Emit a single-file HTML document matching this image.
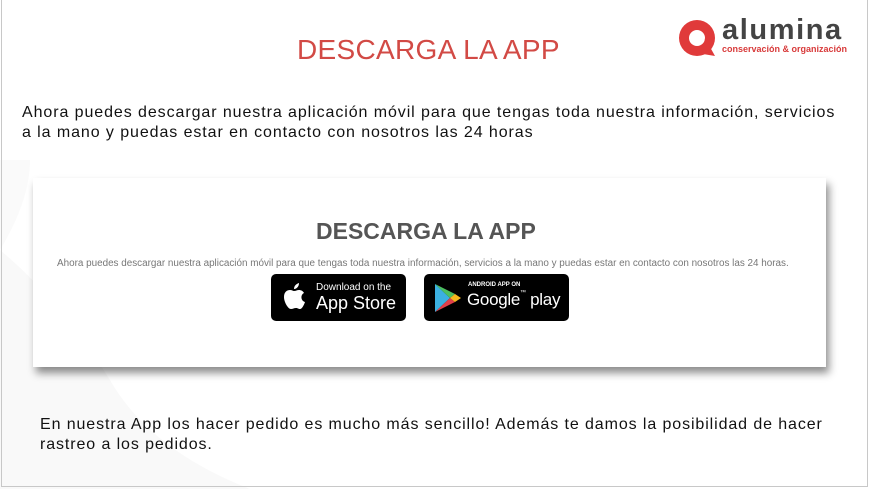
<!DOCTYPE html>
<html><head><meta charset="utf-8"><style>
body{margin:0;width:869px;height:489px;background:#fff;position:relative;overflow:hidden;font-family:"Liberation Sans",sans-serif}
.frame{position:absolute;left:1px;top:-2px;width:865px;height:487px;border:1px solid #c8c8c8}
.t{position:absolute;white-space:nowrap}
.card{position:absolute;left:33px;top:178px;width:793px;height:189px;background:#fff;box-shadow:3px 6px 8px rgba(0,0,0,.45)}
.badge{position:absolute;top:274px;height:47px;background:#000;border-radius:5px;color:#fff}
</style></head><body>
<svg style="position:absolute;left:0;top:0" width="869" height="489"><path d="M0 250 Q60 300 110 380 Q150 450 250 489 L0 489Z" fill="#f9f9f9"/><path d="M0 250 Q30 200 30 160 L0 160Z" fill="#fafafa"/></svg>
<div class="frame"></div>
<div class="t" style="left:297px;top:34px;font-size:28px;color:#d24a45;letter-spacing:0.3px">DESCARGA LA APP</div>
<svg style="position:absolute;left:675px;top:18px" width="48" height="40"><circle cx="22" cy="20" r="18" fill="#e03a3a"/><circle cx="22" cy="20" r="8" fill="#fff"/><path d="M30 20 L40 38 L28 36Z" fill="#e03a3a"/></svg>
<div class="t" style="left:722px;top:14px;font-size:29px;font-weight:bold;color:#444;letter-spacing:1.6px">alumina</div>
<div class="t" style="left:722px;top:44px;font-size:9px;font-weight:bold;color:#d83a3a">conservación &amp; organización</div>
<div class="t" style="left:22px;top:103px;font-size:16px;color:#111;letter-spacing:0.92px;line-height:20px">Ahora puedes descargar nuestra aplicación móvil para que tengas toda nuestra información, servicios<br>a la mano y puedas estar en contacto con nosotros las 24 horas</div>
<div class="card"></div>
<div class="t" style="left:316px;top:218px;font-size:23px;font-weight:bold;color:#555">DESCARGA LA APP</div>
<div class="t" style="left:57px;top:258px;font-size:9.9px;color:#777">Ahora puedes descargar nuestra aplicación móvil para que tengas toda nuestra información, servicios a la mano y puedas estar en contacto con nosotros las 24 horas.</div>
<div class="badge" style="left:271px;width:135px">
<svg style="position:absolute;left:10px;top:8px" width="26" height="30" viewBox="0 0 26 30"><path d="M13 9c2-0 3-1 5-1 2 0 4 1 5 3-4 2-3 8 1 9-1 3-3 7-5 7-2 0-2-1-4-1s-3 1-5 1c-3 0-7-7-7-12 0-5 3-7 6-7 2 0 3 1 4 1z" fill="#fff"/><path d="M13 7c0-3 2-5 5-6 0 3-2 6-5 6z" fill="#fff"/></svg>
<div class="t" style="left:45px;top:8px;font-size:10px">Download on the</div>
<div class="t" style="left:45px;top:19px;font-size:18px">App Store</div></div>
<div class="badge" style="left:424px;width:145px">
<svg style="position:absolute;left:11px;top:10px" width="26" height="28" viewBox="0 0 26 28"><path d="M0 0L15 14 0 28Z" fill="#3bb0e0"/><path d="M0 0L20 10 15 14Z" fill="#4cbf60"/><path d="M0 28L20 18 15 14Z" fill="#e0404a"/><path d="M20 10L26 14 20 18 15 14Z" fill="#f5b81e"/></svg>
<div class="t" style="left:44px;top:8px;font-size:6px;font-weight:bold">ANDROID APP ON</div>
<div class="t" style="left:43px;top:16px;font-size:17px;letter-spacing:-0.3px">Google<span style="font-size:6px;vertical-align:top">™</span> play</div></div>
<div class="t" style="left:40px;top:415px;font-size:16px;color:#111;letter-spacing:0.9px;line-height:20px">En nuestra App los hacer pedido es mucho más sencillo! Además te damos la posibilidad de hacer<br>rastreo a los pedidos.</div>
</body></html>
